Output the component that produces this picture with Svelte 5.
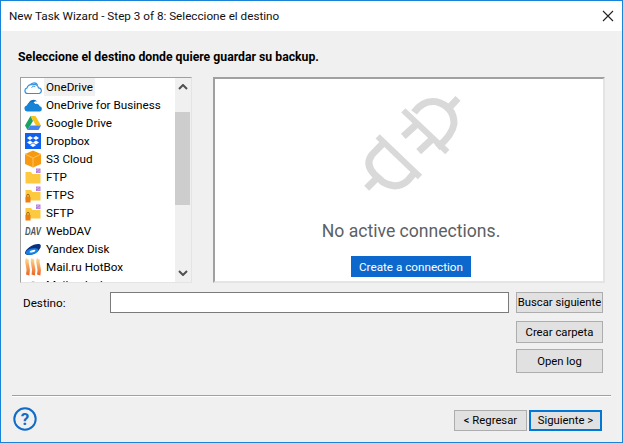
<script>
  const items = [
    { name: "OneDrive", icon: "onedrive", active: true },
    { name: "OneDrive for Business", icon: "business" },
    { name: "Google Drive", icon: "gdrive" },
    { name: "Dropbox", icon: "dropbox" },
    { name: "S3 Cloud", icon: "s3" },
    { name: "FTP", icon: "ftp" },
    { name: "FTPS", icon: "ftps" },
    { name: "SFTP", icon: "ftps" },
    { name: "WebDAV", icon: "webdav" },
    { name: "Yandex Disk", icon: "yandex" },
    { name: "Mail.ru HotBox", icon: "mailru" },
    { name: "Mail.ru Icebox", icon: "icebox" }
  ];
</script>

<div class="window">
  <header class="titlebar">
    <span>New Task Wizard - Step 3 of 8: Seleccione el destino</span>
    <svg class="close" width="12" height="12" viewBox="0 0 12 12">
      <path d="M1 1l10 10M11 1L1 11" stroke="#222" stroke-width="1.1" fill="none" />
    </svg>
  </header>

  <main class="body">
    <h1>Seleccione el destino donde quiere guardar su backup.</h1>

    <div class="panes">
      <div class="list">
        <ul>
          {#each items as item}
            <li>
              <svg class="icon" width="18" height="18" viewBox="0 0 18 18">
                <defs>
                  <linearGradient id="flame-{item.icon}" x1="0" y1="0" x2="0" y2="1">
                    <stop offset="0" stop-color="#fcd890" />
                    <stop offset="1" stop-color="#ee6420" />
                  </linearGradient>
                </defs>
                {#if item.icon === "onedrive"}
                  <path d="M5.500 9.500A4.500 4.500 0 0 1 13.600 6.800" fill="none" stroke="#2f8fe0" stroke-width="1.200" />
                  <path d="M3.700 15.500a2.800 2.800 0 0 1-.7-5.500 4 4 0 0 1 5.300-3.200 4.300 4.300 0 0 1 6.200 3 2.900 2.900 0 0 1 .7 5.700z" fill="#fff" stroke="#2f8fe0" stroke-width="1.200" />
                  <path d="M7.500 9.500a3.700 3.700 0 0 1 3.800-1.200" fill="none" stroke="#2f8fe0" />
                {:else if item.icon === "business"}
                  <path d="M4.500 8a5 5 0 0 1 8.800-2.400A3.600 3.600 0 0 0 8.800 8.200z" fill="#0f6fc0" />
                  <path d="M3.500 15.500a3 3 0 0 1-.8-5.900A5 5 0 0 1 11.500 8a3.200 3.200 0 0 1 4.300 2.300 2.700 2.700 0 0 1 .2 5.200z" fill="#1483d8" />
                {:else if item.icon === "gdrive"}
                  <path d="M6.500 2h5l5.500 9.500h-5z" fill="#f8c21c" />
                  <path d="M6.500 2L1 11.500l2.500 4.500L9 7z" fill="#1ca261" />
                  <path d="M3.500 16l2.700-4.500H17L14.500 16z" fill="#4385f0" />
                {:else if item.icon === "dropbox"}
                  <rect x="1" y="1" width="16" height="16" fill="#0f62f0" />
                  <path d="M6 4l3 2-3 2-3-2zM12 4l3 2-3 2-3-2zM6 8.500l3 2-3 2-3-2zM12 8.500l3 2-3 2-3-2zM6 13.200l3-1.900 3 1.900-3 1.800z" fill="#fff" />
                {:else if item.icon === "s3"}
                  <path d="M9 .5l8 3.500v10l-8 3.500L1 14V4z" fill="#f79a10" />
                  <path d="M1 4l8 4 8-4M9 8v9.500" fill="none" stroke="#fcc468" />
                {:else if item.icon === "ftp"}
                  <path d="M1.500 4h5.500l1.500 2H16.500v9.500H1.500z" fill="#fcc93f" />
                  <path d="M12 0.500h4.500v4.500H12z" fill="#b57ed8" />
                  <path d="M12.500 3l2-2M14 4.500l2-2" stroke="#efe2f6" stroke-width=".7" />
                {:else if item.icon === "ftps"}
                  <path d="M1.500 4h5.500l1.500 2H16.500v8.500H1.500z" fill="#fcc93f" />
                  <path d="M12 0.500h4.500v4.500H12z" fill="#b57ed8" />
                  <path d="M12.500 3l2-2M14 4.500l2-2" stroke="#efe2f6" stroke-width=".7" />
                  <rect x="1.500" y="11" width="5" height="5.500" fill="#ef7d10" />
                  <path d="M2.800 11V9.500a1.200 1.200 0 0 1 2.400 0V11" fill="none" stroke="#a86010" />
                {:else if item.icon === "webdav"}
                  <text class="dav" transform="translate(1 13) scale(1 1.4)">DAV</text>
                {:else if item.icon === "yandex"}
                  <path d="M1 13c0-4 8-9 13-9 3 0 3 1.500 2.500 3.500C15 11 10 15 5 15c-2 0-4-.5-4-2z" fill="#0c2f7e" />
                  <ellipse cx="8" cy="11.500" rx="6.500" ry="3" fill="#1382e6" transform="rotate(-14 8 11.500)" />
                  <ellipse cx="8.500" cy="11.200" rx="3" ry="1.100" fill="#fff" transform="rotate(-14 8.500 11.200)" />
                {:else if item.icon === "mailru"}
                  <path d="M3.500 1c-2.500 4 2.500 7 .2 16M9 1c-2.500 4 2.500 7 .2 16M14.500 1c-2.500 4 2.500 7 .2 16" fill="none" stroke="url(#flame-mailru)" stroke-width="3.400" />
                {:else}
                  <path d="M3.500 8v8M9 5v11M14.500 8v8" stroke="#a8d8f0" stroke-width="2.600" />
                {/if}
              </svg>
              <span class:active={item.active}>{item.name}</span>
            </li>
          {/each}
        </ul>
        <div class="scrollbar">
          <div class="arrow">
            <svg width="10" height="6" viewBox="0 0 10 6"><path d="M1 5l4-4 4 4" fill="none" stroke="#505050" stroke-width="2" /></svg>
          </div>
          <div class="track"><div class="thumb"></div></div>
          <div class="arrow">
            <svg width="10" height="6" viewBox="0 0 10 6"><path d="M1 1l4 4 4-4" fill="none" stroke="#505050" stroke-width="2" /></svg>
          </div>
        </div>
      </div>

      <section class="connections">
        <svg class="plug" width="130" height="120" viewBox="0 0 390 360" fill="none" stroke="#d9d9d9" stroke-width="21">
          <path d="M190 82L322 207" stroke-width="18" />
          <path d="M222 88Q250 50 288 56Q342 70 342 122Q338 155 292 194" />
          <path d="M318 84L354 46" />
          <path d="M190 160L232 122M236 206L278 167" />
          <path d="M113 160L240 282" stroke-width="18" />
          <path d="M130 180L96 215Q74 245 104 275L130 298Q170 322 204 292L226 266" />
          <path d="M80 316L114 282" />
        </svg>
        <p>No active connections.</p>
        <button class="connect">Create a connection</button>
      </section>
    </div>

    <div class="dest">
      <label for="dest">Destino:</label>
      <input id="dest" type="text" />
      <button class="btn wide">Buscar siguiente</button>
    </div>

    <div class="actions">
      <button class="btn wide mid">Crear carpeta</button>
      <button class="btn wide tall">Open log</button>
    </div>

    <div class="spacer"></div>
    <hr />

    <footer>
      <svg width="24" height="24" viewBox="0 0 24 24">
        <circle cx="12" cy="12" r="10.700" fill="none" stroke="#0f6cc8" stroke-width="2" />
        <text x="12" y="18" class="help">?</text>
      </svg>
      <div class="nav">
        <button class="btn">&lt; Regresar</button>
        <button class="btn primary">Siguiente &gt;</button>
      </div>
    </footer>
  </main>
</div>

<style>
  :global(body) {
    margin: 0;
  }

  .window {
    box-sizing: border-box;
    width: 623px;
    height: 443px;
    display: flex;
    flex-direction: column;
    border: 1px solid #1883d7;
    background: #f0f0f0;
    font-family: Roboto, "Noto Sans", sans-serif;
    font-size: 11.7px;
    color: #000;
  }

  .titlebar {
    height: 30px;
    flex: none;
    display: flex;
    align-items: center;
    justify-content: space-between;
    padding: 0 8px 0 8px;
    background: #fff;
    color: #111;
  }

  .body {
    flex: 1;
    min-height: 0;
    display: flex;
    flex-direction: column;
    padding: 0 11px 11px 11px;
  }

  h1 {
    margin: 17px 0 0 6px;
    height: 18px;
    font-size: 12.25px;
    line-height: 18px;
    font-weight: 700;
  }

  .panes {
    margin: 11px 6px 0 8px;
    height: 206px;
    display: flex;
    gap: 21px;
  }

  .list {
    box-sizing: border-box;
    width: 172px;
    flex: none;
    display: flex;
    border: 1px solid #e4e4e4;
    border-top-color: #a0a0a0;
    border-left-color: #a0a0a0;
    background: #fff;
    overflow: hidden;
  }

  ul {
    flex: 1;
    min-width: 0;
    margin: 0;
    padding: 0 0 0 3px;
    list-style: none;
    overflow: hidden;
  }

  li {
    height: 18px;
    display: flex;
    align-items: center;
    gap: 2px;
    white-space: nowrap;
  }

  li .active {
    background: #f0f0f0;
  }

  li span {
    padding: 0 2px;
    line-height: 18px;
  }

  .icon {
    flex: none;
  }

  .dav {
    font-family: "Liberation Sans", sans-serif;
    font-size: 7.8px;
    font-weight: 700;
    font-style: italic;
    fill: #4a5560;
  }

  .scrollbar {
    flex: none;
    width: 16px;
    display: flex;
    flex-direction: column;
    background: #f0f0f0;
  }

  .arrow {
    flex: none;
    width: 15px;
    height: 18px;
    display: flex;
    align-items: center;
    justify-content: center;
  }

  .track {
    flex: 1;
  }

  .thumb {
    margin-top: 16px;
    width: 15px;
    height: 93px;
    background: #cdcdcd;
  }

  .connections {
    flex: 1;
    min-width: 0;
    display: flex;
    flex-direction: column;
    align-items: center;
    box-sizing: border-box;
    padding-left: 4px;
    border: 2px solid #e4e4e4;
    border-top-color: #a0a0a0;
    border-left-color: #a0a0a0;
    background: #fff;
  }

  .plug {
    margin: 4px 12px 0 0;
    flex: none;
  }

  .connections p {
    margin: 16px 0 0;
    font-size: 17.6px;
    line-height: 24px;
    color: #5c6163;
  }

  .connect {
    margin-top: 13px;
    width: 120px;
    height: 21px;
    padding: 0;
    border: 0;
    background: #0c68cc;
    color: #fff;
    font: inherit;
  }

  .dest {
    margin-top: 9px;
    display: flex;
    align-items: center;
    height: 21px;
    flex: none;
  }

  label {
    width: 98px;
    padding-left: 11px;
    box-sizing: border-box;
    flex: none;
  }

  input {
    box-sizing: border-box;
    flex: 1;
    min-width: 0;
    height: 21px;
    margin-right: 7px;
    border: 1px solid #7a7a7a;
    background: #fff;
  }

  .btn {
    box-sizing: border-box;
    height: 21px;
    padding: 0;
    border: 1px solid #adadad;
    background: #e1e1e1;
    color: #000;
    font: inherit;
    font-size: 11.3px;
    white-space: nowrap;
  }

  .btn.wide {
    width: 87px;
    flex: none;
    margin-right: 8px;
  }

  .btn.mid {
    height: 22px;
  }

  .btn.tall {
    height: 24px;
  }

  .actions {
    margin-top: 8px;
    display: flex;
    flex-direction: column;
    align-items: flex-end;
    gap: 6px;
  }

  .spacer {
    flex: 1;
  }

  hr {
    margin: 0;
    height: 2px;
    border: 0;
    background: linear-gradient(#a0a0a0 1px, #fff 1px);
  }

  footer {
    margin-top: 10px;
    display: flex;
    justify-content: space-between;
    align-items: flex-end;
    padding: 0 9px 0 1px;
  }

  .nav {
    display: flex;
    gap: 2px;
  }

  .nav .btn {
    width: 73px;
    height: 21px;
  }

  .btn.primary {
    border: 2px solid #0078d7;
  }

  .help {
    font-size: 17px;
    font-weight: 700;
    text-anchor: middle;
    fill: #0f6cc8;
  }
</style>
